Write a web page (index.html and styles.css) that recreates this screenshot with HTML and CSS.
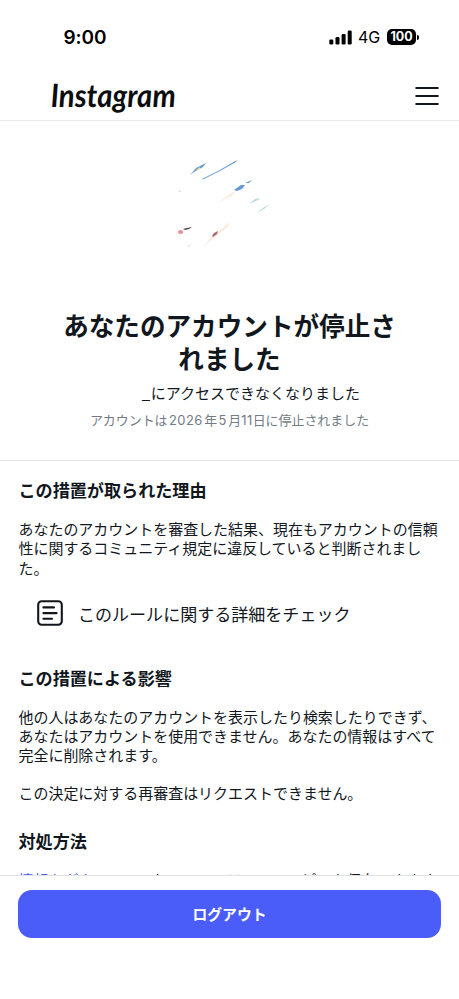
FILE: index.html
```
<!DOCTYPE html>
<html lang="ja">
<head>
<meta charset="utf-8">
<title>Instagram</title>
<link rel="stylesheet" href="styles.css">
</head>
<body>
<div class="screen">
  <div class="status">
    <span class="time">9:00</span>
    <div class="indicators">
      <svg class="signal" width="24" height="15" viewBox="0 0 24 15"><rect x="0.3" y="9.5" width="4" height="5" rx="1.2"/><rect x="6.5" y="7" width="4" height="7.5" rx="1.2"/><rect x="12.6" y="4" width="4" height="10.5" rx="1.2"/><rect x="18.7" y="0.5" width="4" height="14" rx="1.2"/></svg>
      <span class="network">4G</span>
      <span class="battery">100</span>
      <span class="battery-tip"></span>
    </div>
  </div>
  <header class="topbar">
    <svg class="logo" width="128" height="40" viewBox="0 0 128 40"><text x="0" y="28" transform="translate(0 0.5) skewX(2)" textLength="125" lengthAdjust="spacingAndGlyphs">Instagram</text></svg>
    <svg class="menu" width="24" height="20" viewBox="0 0 24 20"><path d="M1.2 1.9H22.8M1.2 10H22.8M1.2 18H22.8"/></svg>
  </header>
  <main class="content">
    <section class="hero">
      <svg class="art" width="120" height="110" viewBox="0 0 120 110">
        <path fill="#669bd2" d="M25 25L31 18L41 13L38 17L29 22ZM37 29L53 21L72 10L71 12L54 21.5L38 29.5ZM69 40L76 35L80 35L77 39L72 41ZM80 33L87 30L84 33Z"/>
        <path fill="#e9dfa0" d="M31 20L35 17L35 19L32 21Z"/>
        <path fill="#b8d9e3" d="M84 54L90 49L95 48L93 50ZM92 63L98 58L105 54L99 59ZM13 42L16 40L15 42Z"/>
        <path fill="#fae9d9" d="M51 54L64 45L70 41L68 45L60 49ZM37 98L46 88L65 72L63 76L50 87ZM21 97L27 93L24 97Z"/>
        <path fill="#a76975" d="M47 86L49 83L53 81L52 84L48 87Z"/>
        <path fill="#554048" d="M18 79L22 78L27 77L24 79L20 80Z"/>
        <ellipse fill="#e9909a" cx="15.5" cy="82" rx="2.6" ry="2"/>
      </svg>
      <h1>あなたのアカウントが停止さ<br>れました</h1>
      <p class="access"><span class="handle">_</span>にアクセスできなくなりました</p>
      <p class="date">アカウントは<span class="num">2026</span>年<span class="num">5</span>月<span class="num tight">11</span>日に停止されました</p>
    </section>
    <section class="details">
      <h2>この措置が取られた理由</h2>
      <p class="reason">あなたのアカウントを審査した結果、現在もアカウントの信頼<br>性に関するコミュニティ規定に違反していると判断されまし<br>た。</p>
      <div class="rule">
        <svg width="26" height="26" viewBox="0 0 26 26"><rect x="1.2" y="1.2" width="23.6" height="23.6" rx="3.5"/><path d="M6.4 7.4H17M6.4 13.1H19.6M6.4 18.8H15"/></svg>
        <span>このルールに関する詳細をチェック</span>
      </div>
      <h2>この措置による影響</h2>
      <p class="impact">他の人はあなたのアカウントを表示したり検索したりできず、<br>あなたはアカウントを使用できません。あなたの情報はすべて<br>完全に削除されます。</p>
      <p class="review">この決定に対する再審査はリクエストできません。</p>
      <h2>対処方法</h2>
      <p class="download"><a>情報をダウンロード</a>して、コンテンツのコピーを保存できます。</p>
    </section>
  </main>
  <footer class="actions"><button>ログアウト</button></footer>
</div>
</body>
</html>
```
FILE: styles.css
```
* { box-sizing: border-box; margin: 0; padding: 0; }
body { background: #fff; color: #11171d; font-family: "Noto Sans CJK JP", sans-serif; }
.screen { width: 459px; height: 999px; display: flex; flex-direction: column; overflow: hidden; }
.status { height: 74px; flex: none; display: flex; justify-content: space-between; align-items: center; padding: 0 40px 0 63.5px; color: #000; font-family: Inter, sans-serif; }
.time { font-size: 19px; font-weight: 600; letter-spacing: -.1px; }
.indicators { display: flex; align-items: center; }
.signal { margin-right: 6px; fill: #000; }
.network { font-size: 16px; width: 28px; letter-spacing: -.1px; position: relative; left: -1px; }
.battery { width: 29px; height: 16px; border-radius: 5px; background: #000; color: #fff; font-size: 12.5px; font-weight: 700; line-height: 16px; text-align: center; }
.battery-tip { width: 2px; height: 5px; margin-left: 1px; border-radius: 0 2px 2px 0; background: #000; }
.topbar { height: 47px; flex: none; display: flex; justify-content: space-between; align-items: center; padding: 0 20px 0 50px; border-bottom: 1px solid #e9eaec; }
.logo text { font: italic 700 32px Lato, sans-serif; fill: #0b0d0f; }
.logo { margin-top: 2px; overflow: visible; }
.menu { fill: none; stroke: #11171d; stroke-width: 2; stroke-linecap: round; margin-top: -3px; }
.content { height: 754px; flex: none; overflow: hidden; }
.hero { height: 340px; display: flex; flex-direction: column; align-items: center; border-bottom: 1px solid #e3e4e6; padding-top: 29px; text-align: center; }
.art { flex: none; margin: 0 9px 48px 0; }
h1 { font-size: 25.6px; line-height: 33px; font-weight: 700; }
.access { font-size: 15px; line-height: 20px; margin-top: 9px; padding-left: 42px; }
.handle { display: inline-block; width: 10px; }
.date { color: #737b85; font-size: 12.95px; line-height: 18px; margin-top: 8px; white-space: nowrap; }
.num { font-family: Inter, sans-serif; margin: 0 1.5px; letter-spacing: .4px; }
.tight { margin: 0; }
.details { padding: 18px 18px 0 18.5px; }
h2 { font-size: 17.1px; line-height: 22px; font-weight: 700; }
.details p { font-size: 14.98px; line-height: 19.3px; white-space: nowrap; }
.reason { margin-top: 18px; }
.rule { display: flex; align-items: center; gap: 15px; margin: 22.5px 0 39.5px 18.5px; height: 28px; font-size: 17.05px; }
.rule svg { fill: none; stroke: #11171d; stroke-width: 2.1; stroke-linecap: round; }
.impact { margin-top: 18px; }
.review { margin-top: 18px; margin-bottom: 28px; }
.details .download { margin-top: 17.5px; }
.download a { color: #4a5df9; }
.actions { flex: 1; border-top: 1px solid #e0e2e5; padding: 14px 18px; background: #fff; }
button { display: block; width: 423px; height: 48px; border: 0; border-radius: 14px; background: #4a5df9; color: #fff; font: 700 14.8px "Noto Sans CJK JP", sans-serif; padding-bottom: 2px; }
```
